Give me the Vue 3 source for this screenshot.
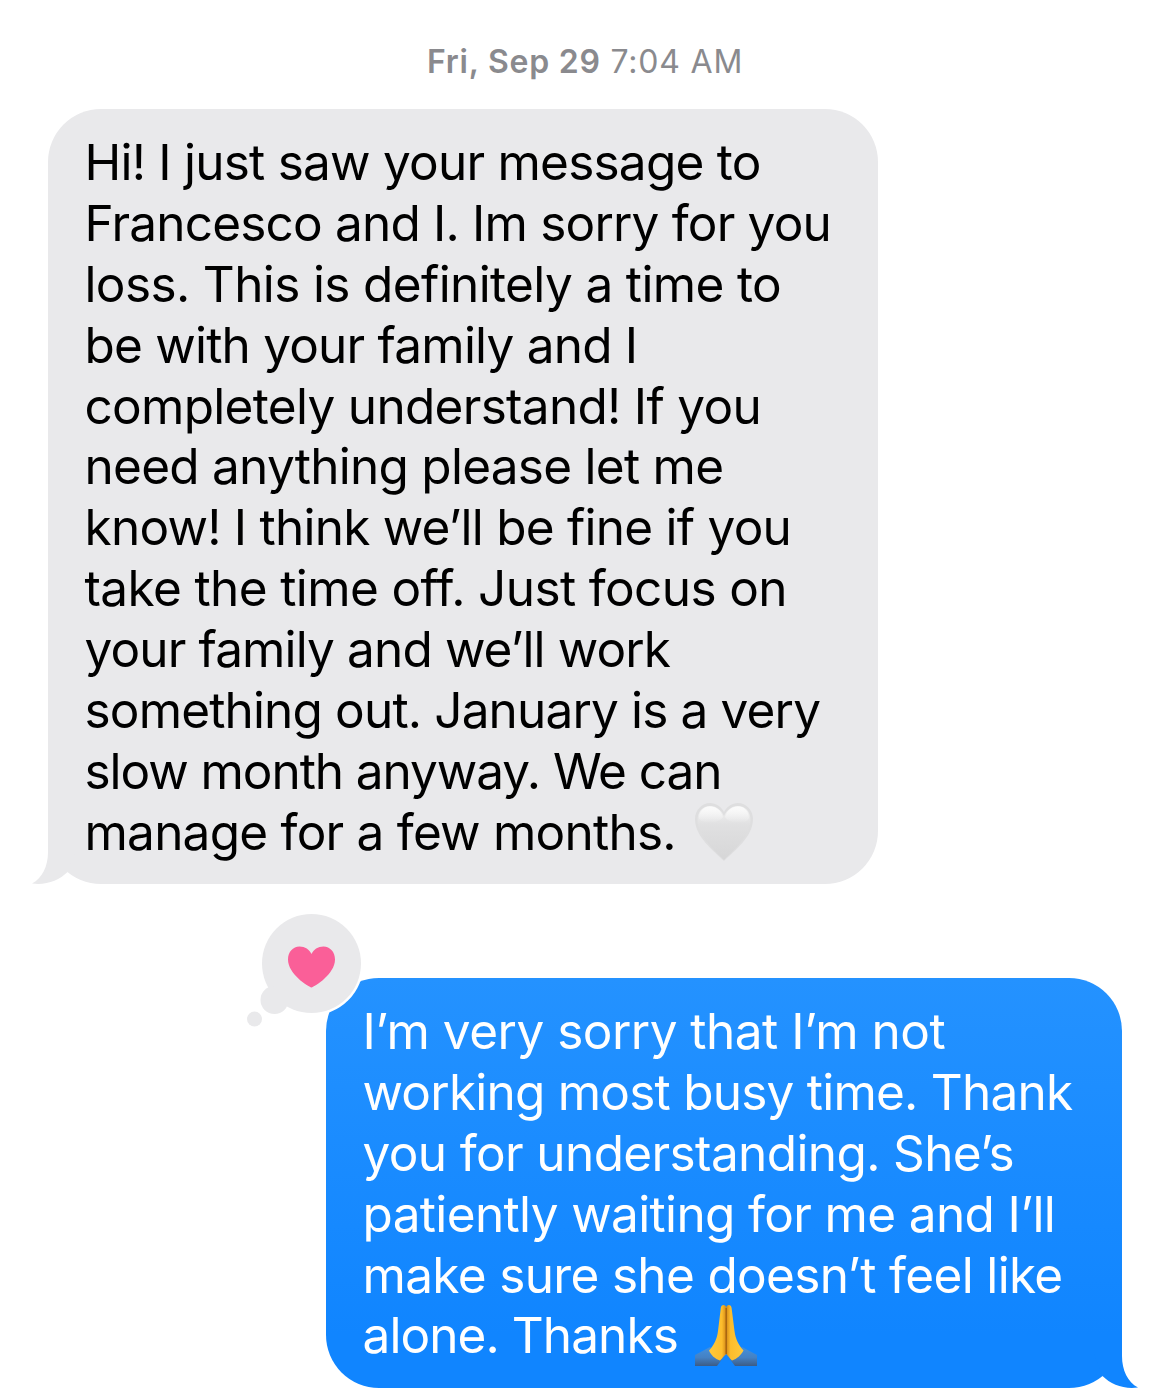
<template>
  <main class="thread">
    <p class="timestamp"><b>Fri, Sep 29</b> <span>7:04 AM</span></p>

    <article v-for="message in messages" :key="message.id" class="bubble" :class="message.from">
      <p v-for="line in message.lines" :key="line.text" class="line">
        <span :style="{ letterSpacing: line.tracking + 'px' }">{{ line.text }}</span>

        <svg v-if="line.emoji === 'heart'" class="emoji heart" viewBox="0 0 58 58">
          <defs>
            <linearGradient id="heart-fill" x1="0" y1="0" x2="0" y2="1">
              <stop offset="0" stop-color="#f3f3f3" />
              <stop offset="0.35" stop-color="#e0e0e1" />
              <stop offset="1" stop-color="#d6d6d7" />
            </linearGradient>
            <linearGradient id="heart-shine" x1="0" y1="0" x2="0" y2="1">
              <stop offset="0" stop-color="#fbfbfb" />
              <stop offset="1" stop-color="#fbfbfb" stop-opacity="0" />
            </linearGradient>
          </defs>
          <path
            d="M29 58C19 48 0 34 0 16C0 7 7 0 15 0C21 0 26 3.500 29 9C32 3.500 37 0 43 0C51 0 58 7 58 16C58 34 39 48 29 58Z"
            fill="#dededf"
          />
          <path
            d="M29 57C19 47 2.500 33 2.500 17C2.500 8.500 8 3 15 3C21.500 3 26.500 7.500 29 13C31.500 7.500 36.500 3 43 3C50 3 55.500 8.500 55.500 17C55.500 33 39 47 29 57Z"
            fill="url(#heart-fill)"
          />
          <path
            d="M4 15C4 8 9 3.500 15 3.500C21 3.500 26 7 28 14C24 21 6 22 4 15ZM54 15C54 8 49 3.500 43 3.500C37 3.500 32 7 30 14C34 21 52 22 54 15Z"
            fill="url(#heart-shine)"
          />
        </svg>

        <svg v-if="line.emoji === 'hands'" class="emoji hands" viewBox="0 0 62 61">
          <defs>
            <linearGradient id="hand-left" x1="0" y1="0" x2="1" y2="0">
              <stop offset="0" stop-color="#ffc93c" />
              <stop offset="0.75" stop-color="#fdbd2c" />
              <stop offset="1" stop-color="#d48a18" />
            </linearGradient>
            <linearGradient id="hand-right" x1="1" y1="0" x2="0" y2="0">
              <stop offset="0" stop-color="#ffc93c" />
              <stop offset="0.75" stop-color="#fdbd2c" />
              <stop offset="1" stop-color="#d48a18" />
            </linearGradient>
            <linearGradient id="sleeve" x1="0" y1="0" x2="0" y2="1">
              <stop offset="0" stop-color="#4590dc" />
              <stop offset="0.55" stop-color="#4481c4" />
              <stop offset="1" stop-color="#3c5c86" />
            </linearGradient>
          </defs>
          <path d="M0 50L15 42L28 53L22 61H0Z" fill="url(#sleeve)" />
          <path d="M62 50L47 42L34 53L40 61H62Z" fill="url(#sleeve)" />
          <path
            d="M25.800 3C26 -0.700 31 -1 31.200 3V49C29 51 27.500 53 25 55.500C20 54 16 50 14 45.500C19 40 22 34 23 26Z"
            fill="url(#hand-left)"
          />
          <path
            d="M36.600 3C36.400 -0.700 31.400 -1 31.200 3V49C33 51 34.500 53 37 55.500C42 54 46 50 48.500 45.500C43.500 40 40.500 34 39.500 26Z"
            fill="url(#hand-right)"
          />
          <path d="M31.200 3V49" stroke="#a8630d" stroke-width="1.400" />
        </svg>
      </p>

      <svg class="tail" viewBox="0 0 44 54">
        <path d="M16 0V22C16 36 10.500 48 0 53.500C14 55.500 27 50.500 35.500 42L44 20V0Z" />
      </svg>

      <svg v-if="message.reaction" class="tapback" viewBox="0 0 120 120">
        <circle class="ring" cx="67.500" cy="52.500" r="52" />
        <g class="cloud">
          <circle cx="67.500" cy="52.500" r="49.500" />
          <circle cx="30.500" cy="89" r="14" />
          <circle cx="10.500" cy="108" r="7.500" />
        </g>
        <path
          class="love"
          d="M67.500 76.500C64 75.500 44 63 44 48.500C44 41 49 35.500 55.500 35.500C61 35.500 65.500 38.500 67.500 43C69.500 38.500 74 35.500 79.500 35.500C86 35.500 91 41 91 48.500C91 63 71 75.500 67.500 76.500Z"
        />
      </svg>
    </article>
  </main>
</template>

<script setup>
const messages = [
  {
    id: 1,
    from: 'received',
    lines: [
      { text: 'Hi! I just saw your message to', tracking: -0.77 },
      { text: 'Francesco and I. Im sorry for you', tracking: -0.81 },
      { text: 'loss. This is definitely a time to', tracking: -0.63 },
      { text: 'be with your family and I', tracking: -0.79 },
      { text: 'completely understand! If you', tracking: -0.7 },
      { text: 'need anything please let me', tracking: -0.73 },
      { text: 'know! I think we’ll be fine if you', tracking: -0.76 },
      { text: 'take the time off. Just focus on', tracking: -0.62 },
      { text: 'your family and we’ll work', tracking: -0.87 },
      { text: 'something out. January is a very', tracking: -0.84 },
      { text: 'slow month anyway. We can', tracking: -1.06 },
      { text: 'manage for a few months.', tracking: -0.76, emoji: 'heart' }
    ]
  },
  {
    id: 2,
    from: 'sent',
    reaction: 'love',
    lines: [
      { text: 'I’m very sorry that I’m not', tracking: -0.52 },
      { text: 'working most busy time. Thank', tracking: -0.77 },
      { text: 'you for understanding. She’s', tracking: -0.62 },
      { text: 'patiently waiting for me and I’ll', tracking: -0.64 },
      { text: 'make sure she doesn’t feel like', tracking: -0.66 },
      { text: 'alone. Thanks', tracking: -0.92, emoji: 'hands' }
    ]
  }
]
</script>

<style>
body {
  margin: 0;
  background: #fff;
}
</style>

<style scoped>
.thread {
  display: flex;
  flex-direction: column;
  box-sizing: border-box;
  height: 1395px;
  padding: 42px 48px 0;
  overflow: hidden;
  font-family: Inter, "Liberation Sans", sans-serif;
}

p {
  margin: 0;
}

.timestamp {
  height: 67px;
  font-size: 32px;
  line-height: 40px;
  letter-spacing: 0.78px;
  text-align: center;
  color: #8a8a8e;
}

.timestamp b {
  font-weight: 600;
}

.bubble {
  position: relative;
  box-sizing: border-box;
  padding: 23px 36.5px 0;
  border-radius: 53px;
  font-size: 49.5px;
  line-height: 60.9px;
}

.received {
  align-self: flex-start;
  width: 830px;
  height: 775px;
  background: #e9e9eb;
  color: #000;
}

.sent {
  align-self: flex-end;
  width: 796px;
  height: 410px;
  margin-top: 94px;
  background: linear-gradient(#2492ff, #1085ff 87%);
  color: #fff;
}

.line {
  display: flex;
  align-items: center;
  height: 60.9px;
  white-space: pre;
}

.emoji {
  flex: none;
}

.heart {
  width: 58px;
  height: 58px;
  margin-left: 19px;
}

.hands {
  width: 62px;
  height: 61px;
  margin-left: 17px;
}

.tail {
  position: absolute;
  bottom: 0;
  left: -16px;
  width: 44px;
  height: 54px;
  fill: #e9e9eb;
}

.sent .tail {
  right: -16px;
  left: auto;
  transform: scaleX(-1);
  fill: #1085ff;
}

.tapback {
  position: absolute;
  top: -67px;
  left: -82px;
  width: 120px;
  height: 120px;
  overflow: visible;
}

.ring {
  fill: #fff;
}

.cloud {
  fill: #e9e9eb;
}

.love {
  fill: #fa5f98;
}
</style>
